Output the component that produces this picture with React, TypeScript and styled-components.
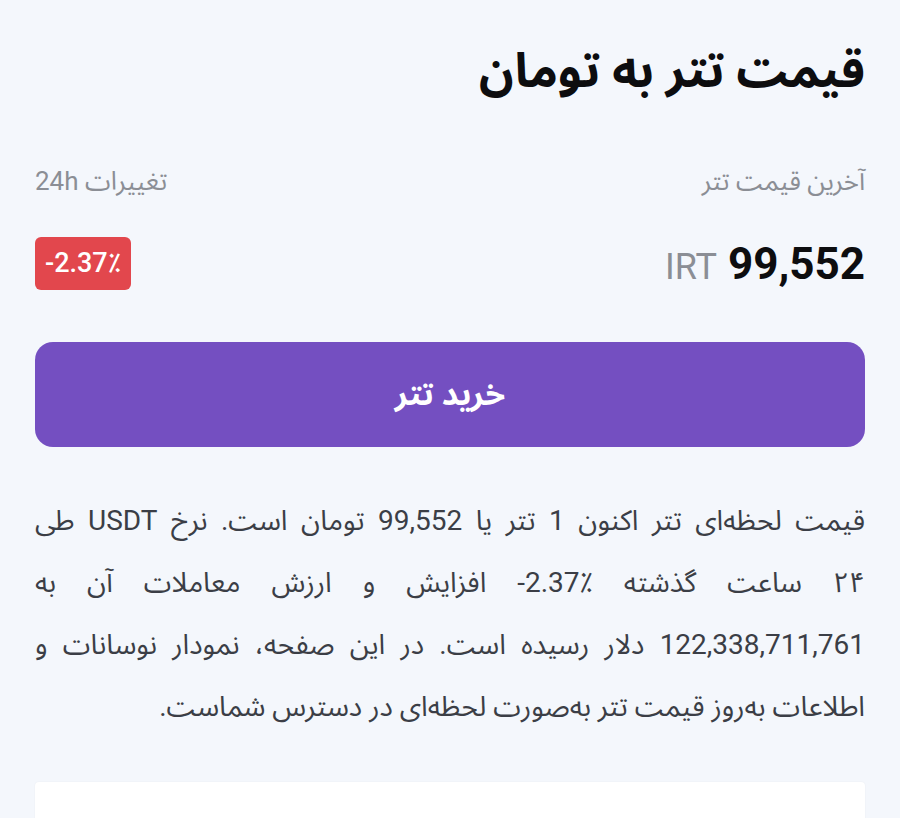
import React from "react";
import styled, { createGlobalStyle } from "styled-components";

const GlobalStyle = createGlobalStyle`
  html, body {
    margin: 0;
    padding: 0;
    background: #f4f7fc;
  }
  body {
    font-family: Roboto, "Noto Sans Arabic", "Vazirmatn", "DejaVu Sans", sans-serif;
  }
`;

const Page = styled.div`
  direction: rtl;
  min-height: 818px;
  padding: 38px 35px 0 35px;
  box-sizing: border-box;
  background: #f4f7fc;
  overflow: hidden;
`;

const Title = styled.h1`
  margin: 0;
  font-size: 48px;
  font-weight: 700;
  color: #0d0d0f;
  line-height: 66px;
`;

const InfoRow = styled.div<{ $top: number }>`
  display: flex;
  justify-content: space-between;
  align-items: center;
  margin-top: ${(p) => p.$top}px;
`;

const Label = styled.span`
  font-size: 26px;
  color: #8b8e95;
`;

const Price = styled.div`
  display: flex;
  align-items: baseline;
  gap: 11px;
  direction: rtl;
`;

const PriceValue = styled.span`
  font-size: 44px;
  font-weight: 700;
  color: #0d0d0f;
  direction: ltr;
`;

const Currency = styled.span`
  font-size: 36px;
  color: #8b8e95;
`;

const Badge = styled.span`
  display: inline-flex;
  align-items: center;
  justify-content: center;
  width: 96px;
  height: 53px;
  border-radius: 6px;
  background: #e2474d;
  color: #fff;
  font-size: 27px;
  font-weight: 500;
  direction: ltr;
`;

const BuyButton = styled.button`
  display: block;
  width: 100%;
  height: 105px;
  margin-top: 52px;
  border: none;
  border-radius: 18px;
  background: #744fc1;
  color: #fff;
  font-family: inherit;
  font-size: 32px;
  font-weight: 700;
`;

const Description = styled.p`
  margin: 43px 0 0 0;
  font-size: 28px;
  line-height: 62px;
  color: #3b3e46;
  text-align: justify;
`;

const Card = styled.div`
  margin-top: 44px;
  height: 60px;
  background: #fff;
  border-radius: 4px;
  box-shadow: 0 0 2px rgba(0, 0, 0, 0.06);
`;

// non-breaking spaces keep the numbers with their words, so lines break as in the design
const description =
  "قیمت لحظه‌ای تتر اکنون 1 تتر یا 99,552 تومان است. نرخ USDT طی ۲۴\u00a0ساعت گذشته \u200e-2.37٪\u200e افزایش و ارزش معاملات آن به 122,338,711,761\u00a0دلار رسیده است. در این صفحه، نمودار نوسانات و اطلاعات به‌روز قیمت تتر به‌صورت لحظه‌ای در دسترس شماست.";

const App: React.FC = () => {
  return (
    <>
      <GlobalStyle />
      <Page>
        <Title>قیمت تتر به تومان</Title>

        <InfoRow $top={50}>
          <Label>آخرین قیمت تتر</Label>
          <Label>تغییرات 24h</Label>
        </InfoRow>

        <InfoRow $top={28}>
          <Price>
            <PriceValue>99,552</PriceValue>
            <Currency>IRT</Currency>
          </Price>
          <Badge>-2.37٪</Badge>
        </InfoRow>

        <BuyButton>خرید تتر</BuyButton>

        <Description>{description}</Description>

        <Card />
      </Page>
    </>
  );
};

export default App;
